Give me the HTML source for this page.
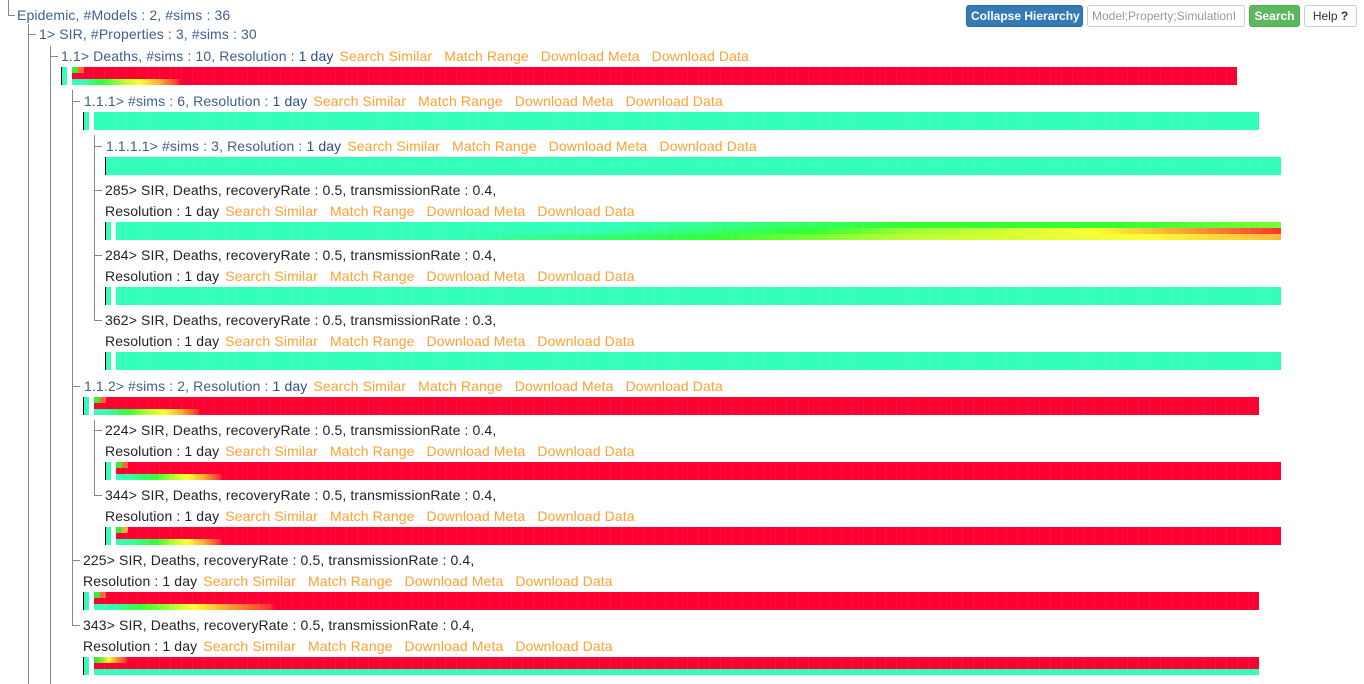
<!DOCTYPE html>
<html><head><meta charset="utf-8"><style>
*{margin:0;padding:0;box-sizing:border-box}
body{width:1364px;height:684px;background:#fff;position:relative;overflow:hidden;font-family:"Liberation Sans",Arial,sans-serif;font-size:14px}
.t{position:absolute;white-space:nowrap;line-height:16px;color:#222;letter-spacing:0.12px}
.h{color:#3f5f8f}
.h b{font-weight:normal;color:#2f4f7f}
.l{color:#ffa033;margin-left:12px}
.l1{margin-left:6px}
.v{position:absolute;width:1px;background:#888}
.c{position:absolute;height:1px;width:7px;background:#888}
.bar{position:absolute;height:18px}
.bar div{height:6px}
.bar:after{content:"";position:absolute;left:0;top:0;right:0;bottom:0;background:repeating-linear-gradient(90deg,transparent 0 10px,rgba(255,255,255,.07) 10px 11px)}
.k{position:absolute;width:1px;height:18px;background:#000}
.m{position:absolute;width:5px;height:18px;background:#33ffbb}
.R{background:#ff0033}
.T{background:#33ffbb}
.btn{position:absolute;top:5px;height:22px;border-radius:3px;font-size:12px;line-height:20px;padding:0 4px;border:1px solid;white-space:nowrap;overflow:hidden;text-align:center}
</style></head><body>

<div class="v" style="left:8px;top:0;height:15px"></div><div class="c" style="left:8px;top:15px"></div>
<div class="v" style="left:28px;top:24px;height:660px"></div><div class="c" style="left:28px;top:34px;width:8px"></div>
<div class="v" style="left:50px;top:46px;height:638px"></div><div class="c" style="left:50px;top:56px;width:8px"></div>
<div class="v" style="left:72px;top:90px;height:536px"></div>
<div class="c" style="left:72px;top:101px;width:8px"></div>
<div class="c" style="left:72px;top:386px;width:8px"></div>
<div class="c" style="left:72px;top:560px;width:8px"></div>
<div class="c" style="left:72px;top:625px;width:8px"></div>
<div class="v" style="left:94px;top:135px;height:186px"></div>
<div class="c" style="left:94px;top:146px;width:8px"></div>
<div class="c" style="left:94px;top:190px;width:8px"></div>
<div class="c" style="left:94px;top:255px;width:8px"></div>
<div class="c" style="left:94px;top:320px;width:8px"></div>
<div class="v" style="left:94px;top:420px;height:76px"></div>
<div class="c" style="left:94px;top:430px;width:8px"></div>
<div class="c" style="left:94px;top:495px;width:8px"></div>

<div class="btn" style="left:966px;width:117px;background:#337ab7;border-color:#2e6da4;color:#fff;font-weight:bold">Collapse Hierarchy</div>
<div class="btn" style="left:1087px;width:158px;background:#fff;border-color:#ccc;color:#999;text-align:left">Model;Property;SimulationI</div>
<div class="btn" style="left:1249px;width:51px;background:#5cb85c;border-color:#4cae4c;color:#fff;font-weight:bold">Search</div>
<div class="btn" style="left:1304px;width:53px;background:#fff;border-color:#ccc;color:#333">Help <b>?</b></div>

<div class="t h" style="left:17px;top:7px">Epidemic, #Models : 2, #sims : 36</div>
<div class="t h" style="left:39px;top:26px">1&gt; SIR, #Properties : 3, #sims : 30</div>
<div class="t h" style="left:61px;top:48px">1.1&gt; Deaths, #sims : 10, Resolution : <b>1 day</b><span class="l l1">Search Similar</span><span class="l">Match Range</span><span class="l">Download Meta</span><span class="l">Download Data</span></div>
<div class="k" style="left:61px;top:67px"></div><div class="m" style="left:62px;top:67px"></div>
<div class="bar" style="left:72px;top:67px;width:1165px"><div style="background:linear-gradient(90deg,#33ee33 0 6px,#ff6633 6px 12px,#ff0033 12px)"></div><div class="R"></div><div style="background:linear-gradient(90deg,#33ffbb 0,#33ffaa 12px,#33ff33 30px,#aaff33 50px,#ffff33 68px,#ffaa33 88px,#ff3333 106px,#ff0033 108px)"></div></div>

<div class="t h" style="left:84px;top:93px">1.1.1&gt; #sims : 6, Resolution : <b>1 day</b><span class="l l1">Search Similar</span><span class="l">Match Range</span><span class="l">Download Meta</span><span class="l">Download Data</span></div>
<div class="k" style="left:83px;top:112px"></div><div class="m" style="left:84px;top:112px"></div>
<div class="bar T" style="left:94px;top:112px;width:1165px"></div>

<div class="t h" style="left:106px;top:138px">1.1.1.1&gt; #sims : 3, Resolution : <b>1 day</b><span class="l l1">Search Similar</span><span class="l">Match Range</span><span class="l">Download Meta</span><span class="l">Download Data</span></div>
<div class="k" style="left:105px;top:157px"></div>
<div class="bar T" style="left:106px;top:157px;width:1175px"></div>

<div class="t" style="left:105px;top:182px">285&gt; SIR, Deaths, recoveryRate : 0.5, transmissionRate : 0.4,</div>
<div class="t" style="left:105px;top:203px">Resolution : 1 day<span class="l l1">Search Similar</span><span class="l">Match Range</span><span class="l">Download Meta</span><span class="l">Download Data</span></div>
<div class="k" style="left:105px;top:222px"></div><div class="m" style="left:106px;top:222px"></div>
<div class="bar" style="left:116px;top:222px;width:1165px"><div style="background:linear-gradient(90deg,#33ffbb 0,#33ffbb 500px,#33ff33 790px,#33ff33 1000px,#77ff33 1165px)"></div><div style="background:linear-gradient(90deg,#33ffbb 0,#33ffbb 480px,#33ff33 700px,#99ff33 790px,#ffff33 977px,#ffaa33 1060px,#ff3333 1165px)"></div><div style="background:linear-gradient(90deg,#33ffbb 0,#33ffbb 340px,#33ff33 600px,#bbff33 790px,#ffff33 1030px,#ffbb33 1165px)"></div></div>

<div class="t" style="left:105px;top:247px">284&gt; SIR, Deaths, recoveryRate : 0.5, transmissionRate : 0.4,</div>
<div class="t" style="left:105px;top:268px">Resolution : 1 day<span class="l l1">Search Similar</span><span class="l">Match Range</span><span class="l">Download Meta</span><span class="l">Download Data</span></div>
<div class="k" style="left:105px;top:287px"></div><div class="m" style="left:106px;top:287px"></div>
<div class="bar T" style="left:116px;top:287px;width:1165px"></div>

<div class="t" style="left:105px;top:312px">362&gt; SIR, Deaths, recoveryRate : 0.5, transmissionRate : 0.3,</div>
<div class="t" style="left:105px;top:333px">Resolution : 1 day<span class="l l1">Search Similar</span><span class="l">Match Range</span><span class="l">Download Meta</span><span class="l">Download Data</span></div>
<div class="k" style="left:105px;top:352px"></div><div class="m" style="left:106px;top:352px"></div>
<div class="bar T" style="left:116px;top:352px;width:1165px"></div>

<div class="t h" style="left:84px;top:378px">1.1.2&gt; #sims : 2, Resolution : <b>1 day</b><span class="l l1">Search Similar</span><span class="l">Match Range</span><span class="l">Download Meta</span><span class="l">Download Data</span></div>
<div class="k" style="left:83px;top:397px"></div><div class="m" style="left:84px;top:397px"></div>
<div class="bar" style="left:94px;top:397px;width:1165px"><div style="background:linear-gradient(90deg,#33ee33 0 6px,#ff6633 6px 12px,#ff0033 12px)"></div><div class="R"></div><div style="background:linear-gradient(90deg,#33ffbb 0,#33ffaa 12px,#33ff33 35px,#aaff33 52px,#ffff33 70px,#ffaa33 88px,#ff3333 104px,#ff0033 106px)"></div></div>

<div class="t" style="left:105px;top:422px">224&gt; SIR, Deaths, recoveryRate : 0.5, transmissionRate : 0.4,</div>
<div class="t" style="left:105px;top:443px">Resolution : 1 day<span class="l l1">Search Similar</span><span class="l">Match Range</span><span class="l">Download Meta</span><span class="l">Download Data</span></div>
<div class="k" style="left:105px;top:462px"></div><div class="m" style="left:106px;top:462px"></div>
<div class="bar" style="left:116px;top:462px;width:1165px"><div style="background:linear-gradient(90deg,#33ee33 0 6px,#ff6633 6px 12px,#ff0033 12px)"></div><div class="R"></div><div style="background:linear-gradient(90deg,#33ffbb 0,#33ffaa 12px,#33ff33 40px,#aaff33 56px,#ffff33 72px,#ffaa33 88px,#ff3333 104px,#ff0033 106px)"></div></div>

<div class="t" style="left:105px;top:487px">344&gt; SIR, Deaths, recoveryRate : 0.5, transmissionRate : 0.4,</div>
<div class="t" style="left:105px;top:508px">Resolution : 1 day<span class="l l1">Search Similar</span><span class="l">Match Range</span><span class="l">Download Meta</span><span class="l">Download Data</span></div>
<div class="k" style="left:105px;top:527px"></div><div class="m" style="left:106px;top:527px"></div>
<div class="bar" style="left:116px;top:527px;width:1165px"><div style="background:linear-gradient(90deg,#33ee33 0 6px,#ffaa33 6px 12px,#ff0033 12px)"></div><div class="R"></div><div style="background:linear-gradient(90deg,#33ffbb 0,#33ffaa 12px,#33ff33 40px,#aaff33 56px,#ffff33 72px,#ffaa33 88px,#ff3333 104px,#ff0033 106px)"></div></div>

<div class="t" style="left:83px;top:552px">225&gt; SIR, Deaths, recoveryRate : 0.5, transmissionRate : 0.4,</div>
<div class="t" style="left:83px;top:573px">Resolution : 1 day<span class="l l1">Search Similar</span><span class="l">Match Range</span><span class="l">Download Meta</span><span class="l">Download Data</span></div>
<div class="k" style="left:83px;top:592px"></div><div class="m" style="left:84px;top:592px"></div>
<div class="bar" style="left:94px;top:592px;width:1165px"><div style="background:linear-gradient(90deg,#33ee33 0 6px,#ff6633 6px 12px,#ff0033 12px)"></div><div class="R"></div><div style="background:linear-gradient(90deg,#33ffbb 0,#33ffaa 20px,#33ff33 45px,#aaff33 80px,#ffff33 100px,#ffaa33 130px,#ff3333 175px,#ff0033 182px)"></div></div>

<div class="t" style="left:83px;top:617px">343&gt; SIR, Deaths, recoveryRate : 0.5, transmissionRate : 0.4,</div>
<div class="t" style="left:83px;top:638px">Resolution : 1 day<span class="l l1">Search Similar</span><span class="l">Match Range</span><span class="l">Download Meta</span><span class="l">Download Data</span></div>
<div class="k" style="left:83px;top:657px"></div><div class="m" style="left:84px;top:657px"></div>
<div class="bar" style="left:94px;top:657px;width:1165px"><div style="background:linear-gradient(90deg,#33dd33 0,#99ee33 10px,#ffff33 15px,#ff9933 22px,#ff5533 30px,#ff0033 34px)"></div><div class="R"></div><div class="T"></div></div>

</body></html>
